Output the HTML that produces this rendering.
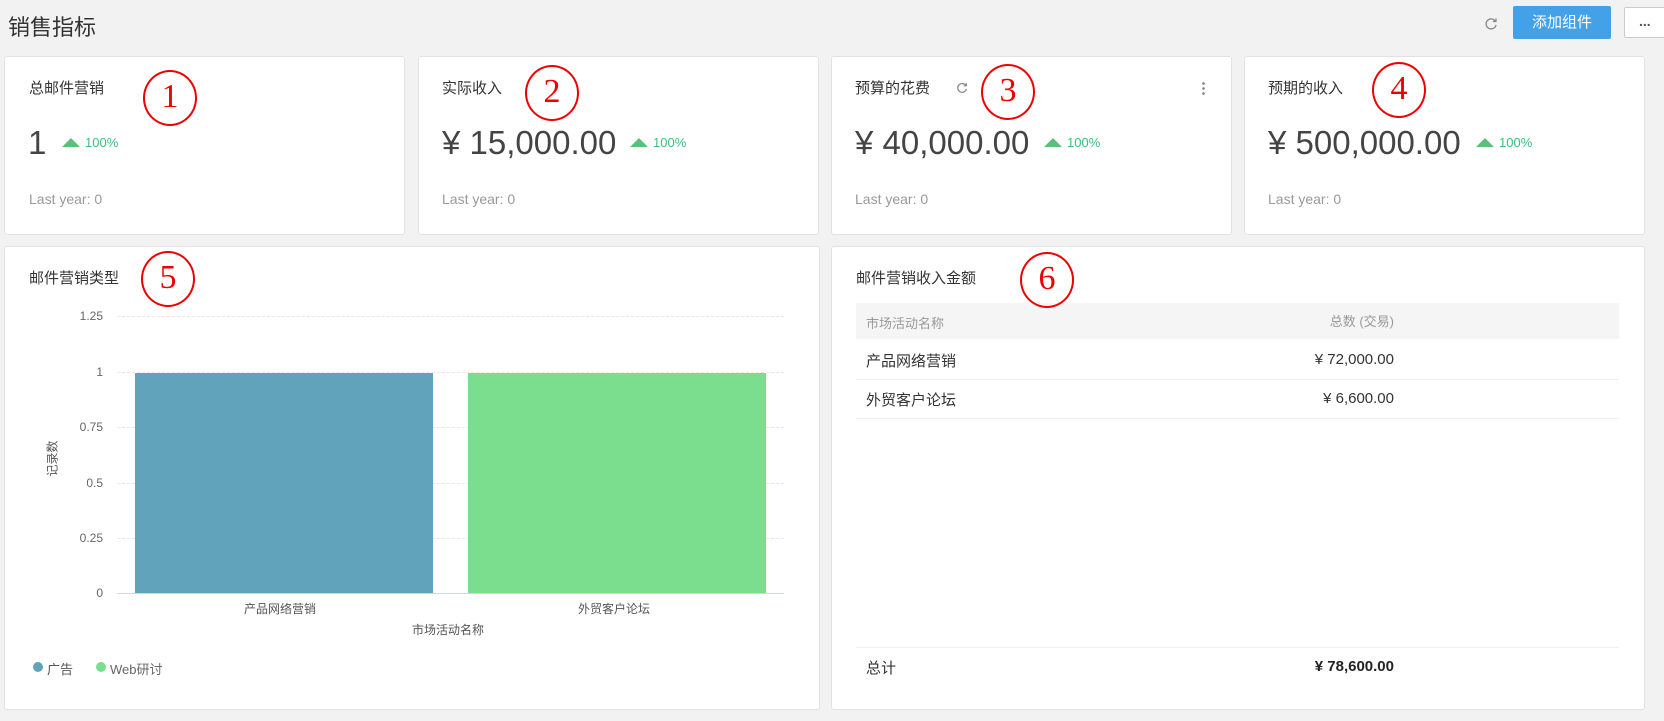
<!DOCTYPE html>
<html><head><meta charset="utf-8"><style>
*{margin:0;padding:0;box-sizing:border-box}
body{width:1664px;height:721px;background:#f2f2f2;font-family:"Liberation Sans","Noto Sans CJK SC",sans-serif;position:relative;overflow:hidden;color:#333}
.a{position:absolute;white-space:nowrap}
.card{position:absolute;background:#fff;border:1px solid #e2e2e2;border-radius:3px}
.t{font-size:15px;color:#333;line-height:20px}
.big{font-size:33px;font-weight:300;color:#444;line-height:36px}
.pct{font-size:13px;color:#3cbf7e;line-height:16px}
.tri{display:inline-block;width:0;height:0;border-left:9px solid transparent;border-right:9px solid transparent;border-bottom:9px solid #5cbf7a;margin-right:5px;vertical-align:0}
.ly{font-size:14px;color:#999;line-height:16px}
.circ{position:absolute;width:54px;height:56px;border:2.5px solid #e00;border-radius:50%;color:#e00;font-family:"Liberation Serif",serif;font-size:34px;text-align:center;line-height:50px}
.yl{position:absolute;font-size:12px;color:#666;width:40px;text-align:right;line-height:14px}
.gl{position:absolute;left:117px;width:667px;border-top:1px dashed #e8e8e8}
</style></head><body>
<div class="a" style="left:8px;top:14px;font-size:22px;color:#333;line-height:28px">销售指标</div>
<svg class="a" style="left:1483px;top:16px" width="16" height="16" viewBox="0 0 16 16"><path d="M12.5 5.5A5 5 0 1 0 13 9" fill="none" stroke="#888" stroke-width="1.3"/><path d="M10 5.5h3v-3" fill="none" stroke="#888" stroke-width="1.3"/></svg>
<div class="a" style="left:1513px;top:6px;width:98px;height:33px;background:#44a1e8;color:#fff;font-size:15px;text-align:center;line-height:33px;border-radius:2px">添加组件</div>
<div class="a" style="left:1624px;top:7px;width:50px;height:31px;background:#fff;border:1px solid #ccc;border-radius:2px;font-size:14px;color:#555;line-height:26px;padding-left:14px;font-weight:bold">...</div>

<div class="card" style="left:4px;top:56px;width:401px;height:179px"></div>
<div class="card" style="left:418px;top:56px;width:401px;height:179px"></div>
<div class="card" style="left:831px;top:56px;width:401px;height:179px"></div>
<div class="card" style="left:1244px;top:56px;width:401px;height:179px"></div>

<div class="a t" style="left:29px;top:79px">总邮件营销</div>
<div class="a big" style="left:28px;top:125px">1</div>
<div class="a pct" style="left:62px;top:135px"><span class="tri"></span>100%</div>
<div class="a ly" style="left:29px;top:191px">Last year: 0</div>

<div class="a t" style="left:442px;top:79px">实际收入</div>
<div class="a big" style="left:442px;top:125px">¥ 15,000.00</div>
<div class="a pct" style="left:630px;top:135px"><span class="tri"></span>100%</div>
<div class="a ly" style="left:442px;top:191px">Last year: 0</div>

<div class="a t" style="left:855px;top:79px">预算的花费</div>
<svg class="a" style="left:955px;top:81px" width="14" height="14" viewBox="0 0 16 16"><path d="M12.5 5.5A5 5 0 1 0 13 9" fill="none" stroke="#888" stroke-width="1.4"/><path d="M10 5.5h3v-3" fill="none" stroke="#888" stroke-width="1.4"/></svg>
<div class="a" style="left:1202px;top:81px;width:3px;height:14px;background:radial-gradient(circle,#888 1.2px,transparent 1.5px) 0 0/3px 5px"></div>
<div class="a big" style="left:855px;top:125px">¥ 40,000.00</div>
<div class="a pct" style="left:1044px;top:135px"><span class="tri"></span>100%</div>
<div class="a ly" style="left:855px;top:191px">Last year: 0</div>

<div class="a t" style="left:1268px;top:79px">预期的收入</div>
<div class="a big" style="left:1268px;top:125px">¥ 500,000.00</div>
<div class="a pct" style="left:1476px;top:135px"><span class="tri"></span>100%</div>
<div class="a ly" style="left:1268px;top:191px">Last year: 0</div>

<div class="card" style="left:4px;top:246px;width:816px;height:464px"></div>
<div class="card" style="left:831px;top:246px;width:814px;height:464px"></div>

<div class="a t" style="left:29px;top:269px">邮件营销类型</div>
<div class="gl" style="top:316px"></div>
<div class="gl" style="top:372px"></div>
<div class="gl" style="top:427px"></div>
<div class="gl" style="top:483px"></div>
<div class="gl" style="top:538px"></div>
<div class="a" style="left:117px;top:593px;width:667px;border-top:1px solid #cdd8e0"></div>
<div class="yl" style="left:63px;top:309px">1.25</div>
<div class="yl" style="left:63px;top:365px">1</div>
<div class="yl" style="left:63px;top:420px">0.75</div>
<div class="yl" style="left:63px;top:476px">0.5</div>
<div class="yl" style="left:63px;top:531px">0.25</div>
<div class="yl" style="left:63px;top:586px">0</div>
<div class="a" style="left:135px;top:373px;width:298px;height:220px;background:#62a3bc"></div>
<div class="a" style="left:468px;top:373px;width:298px;height:220px;background:#7bde8f"></div>
<div class="a" style="left:34px;top:450px;font-size:12px;color:#555;transform:rotate(-90deg)">记录数</div>
<div class="a" style="left:244px;top:600px;font-size:12px;color:#555">产品网络营销</div>
<div class="a" style="left:578px;top:600px;font-size:12px;color:#555">外贸客户论坛</div>
<div class="a" style="left:412px;top:621px;font-size:12px;color:#555">市场活动名称</div>
<div class="a" style="left:33px;top:662px;width:10px;height:10px;border-radius:50%;background:#62a3bc"></div>
<div class="a" style="left:47px;top:659px;font-size:13px;color:#555">广告</div>
<div class="a" style="left:96px;top:662px;width:10px;height:10px;border-radius:50%;background:#7bde8f"></div>
<div class="a" style="left:110px;top:659px;font-size:13px;color:#666">Web研讨</div>

<div class="a t" style="left:856px;top:269px">邮件营销收入金额</div>
<div class="a" style="left:856px;top:303px;width:763px;height:36px;background:#f5f5f5"></div>
<div class="a" style="left:866px;top:313px;font-size:13px;color:#999">市场活动名称</div>
<div class="a" style="left:1294px;top:311px;width:100px;text-align:right;font-size:13px;color:#999">总数 (交易)</div>
<div class="a" style="left:866px;top:350px;font-size:15px;color:#333">产品网络营销</div>
<div class="a" style="left:1244px;top:351px;width:150px;text-align:right;font-size:15px;color:#333">¥ 72,000.00</div>
<div class="a" style="left:856px;top:379px;width:763px;border-top:1px solid #f0f0f0"></div>
<div class="a" style="left:866px;top:389px;font-size:15px;color:#333">外贸客户论坛</div>
<div class="a" style="left:1244px;top:390px;width:150px;text-align:right;font-size:15px;color:#333">¥ 6,600.00</div>
<div class="a" style="left:856px;top:418px;width:763px;border-top:1px solid #f0f0f0"></div>
<div class="a" style="left:856px;top:647px;width:763px;border-top:1px solid #f0f0f0"></div>
<div class="a" style="left:866px;top:657px;font-size:15px;color:#333">总计</div>
<div class="a" style="left:1244px;top:658px;width:150px;text-align:right;font-size:15px;color:#222;font-weight:bold">¥ 78,600.00</div>

<div class="circ" style="left:143px;top:70px">1</div>
<div class="circ" style="left:525px;top:65px">2</div>
<div class="circ" style="left:981px;top:64px">3</div>
<div class="circ" style="left:1372px;top:62px">4</div>
<div class="circ" style="left:141px;top:251px">5</div>
<div class="circ" style="left:1020px;top:252px">6</div>
</body></html>
